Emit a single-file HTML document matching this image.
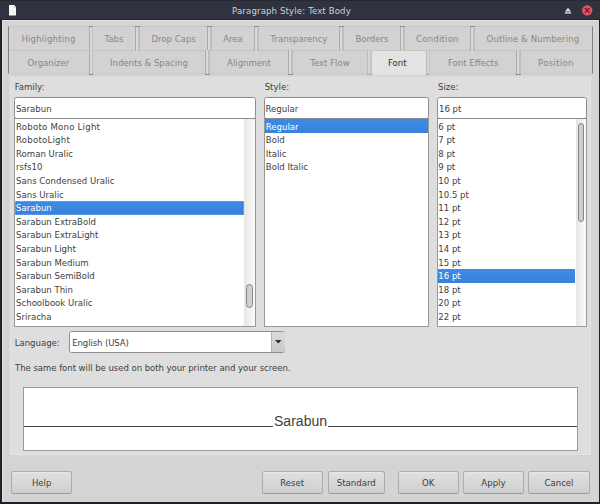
<!DOCTYPE html>
<html>
<head>
<meta charset="utf-8">
<title>Paragraph Style: Text Body</title>
<style>
html,body{margin:0;padding:0;}
body{width:600px;height:504px;overflow:hidden;background:#d4d4d4;font-family:"DejaVu Sans Condensed","Liberation Sans","DejaVu Sans",sans-serif;font-size:9.5px;color:#3e3e3e;position:relative;}
.abs{position:absolute;}
#win{position:absolute;left:0;top:0;width:600px;height:504px;background:#d4d4d4;overflow:hidden;}
#title{position:absolute;left:0;top:0;width:600px;height:20px;background:#2f3340;border-top:1px solid #262932;border-bottom:1.4px solid #23262e;box-sizing:border-box;}
#hl{position:absolute;left:2.3px;top:20px;width:596px;height:482px;box-sizing:border-box;border-top:1px solid #e6e6e6;border-left:1px solid #e0e0e0;}
#title .t{position:absolute;left:0;width:583px;top:3.2px;text-align:center;color:#cdd0d7;font-size:9.5px;letter-spacing:0.15px;line-height:14px;white-space:nowrap;}
#bl{position:absolute;left:0;top:20px;width:2.2px;height:484px;background:#1f2127;}
#br{position:absolute;left:598.6px;top:20px;width:1.7px;height:484px;background:#1f2127;}
#bb{position:absolute;left:0;top:502px;width:600px;height:2px;background:#1f2127;}
#tabbg{position:absolute;left:7.6px;top:26px;width:585px;height:48.4px;background:#d2d2d2;border:1px solid #c4c4c4;border-bottom-color:#c8c8c8;border-left-color:#808080;border-right-color:#808080;box-sizing:border-box;}
#tabmid{position:absolute;left:8.6px;top:50px;width:583px;height:1px;background:#c4c4c4;}
.tab{position:absolute;height:24px;color:#878787;text-align:center;line-height:23.5px;font-size:9.5px;white-space:nowrap;}
.tab.on{background:#e3e3e3;color:#2f2f2f;height:24.5px;border-radius:2px 2px 0 0;box-sizing:border-box;padding-right:3px;}
.sep.lt{opacity:0.55;}
.sep.r2{background-position:0 100%,0 0;}
.sep{position:absolute;width:4.4px;background:linear-gradient(#8e8e8e,#8e8e8e) 0 0/100% 1px no-repeat,linear-gradient(90deg,#acacac 0,#acacac 1px,#d9d9d9 1px,#d9d9d9 3.4px,#bebebe 3.4px,#bebebe 4.4px);}
#panel{position:absolute;left:10.2px;top:75.6px;width:580.8px;height:379.9px;background:#dedede;border:1px solid #e4e4e4;border-top-color:#dadada;box-sizing:border-box;}
.lbl{position:absolute;font-size:9.5px;line-height:12px;white-space:nowrap;}
.entry{position:absolute;box-sizing:border-box;background:#fff;border:1px solid #8e8e8e;border-radius:2.5px;font-size:9.5px;line-height:12px;white-space:nowrap;}
.entry span{position:absolute;left:0.6px;top:4.6px;}
.list{position:absolute;box-sizing:border-box;background:#fff;border:1px solid #999;border-top-color:#8a8a8a;}
.it{padding-left:0.8px;position:absolute;height:13.6px;line-height:13.6px;font-size:9.5px;white-space:nowrap;box-sizing:border-box;}
.it b{font-weight:normal;position:relative;top:0.3px;}
.it b.n{left:-0.9px;}
.it.foc{outline:1px dotted #e8963c;outline-offset:-1px;}
.it.sel{background:linear-gradient(#3b8ce6,#3a80d9);color:#fff;height:14.1px;}
.sb{position:absolute;background:linear-gradient(90deg,#e6e6e6,#fafafa);}
.th{position:absolute;background:#cfcfcf;border:1px solid #858585;border-radius:3.6px;box-sizing:border-box;}
.btn{position:absolute;box-sizing:border-box;height:23.2px;top:470.8px;border:1px solid #adadad;border-bottom-color:#9c9c9c;border-radius:2.5px;background:linear-gradient(#e0e0e0,#cfcfcf);box-shadow:inset 0 1px 0 #e8e8e8;text-align:center;line-height:21px;font-size:9.5px;white-space:nowrap;}
</style>
</head>
<body>
<div id="win">
<div id="title"><div class="t">Paragraph Style: Text Body</div>
<svg class="abs" style="left:8.8px;top:4px" width="7.5" height="10.5" viewBox="0 0 7.5 10.5"><path d="M0 0 H5 L7.5 2.5 V10.5 H0 Z" fill="#f6f6f4"/><path d="M5 0 V2.5 H7.5 Z" fill="#bdbdb8"/></svg>
<svg class="abs" style="left:564px;top:6px" width="9" height="8" viewBox="0 0 9 8"><path d="M4 0.8 L7.1 4.4 H0.9 Z" fill="#d8dbe0"/><rect x="0.9" y="5.2" width="6.2" height="1.4" fill="#d8dbe0"/></svg>
<svg class="abs" style="left:581px;top:3px" width="13" height="13" viewBox="0 0 13 13"><circle cx="6.2" cy="6.4" r="5.2" fill="#e5525c"/><path d="M4.4 4.5 L8 8.1 M8 4.5 L4.4 8.1" stroke="#3a2f3a" stroke-width="1.4" stroke-linecap="round"/></svg>
</div>
<div id="hl"></div><div id="bl"></div><div id="br"></div><div id="bb"></div>

<div id="tabbg"></div>
<div id="tabmid"></div>
<div class="tab" style="left:8px;top:26.5px;width:81.0px;letter-spacing:0.2px">Highlighting</div>
<div class="tab" style="left:92.4px;top:26.5px;width:43.2px;letter-spacing:0px">Tabs</div>
<div class="tab" style="left:139.6px;top:26.5px;width:68.0px;letter-spacing:0px">Drop Caps</div>
<div class="tab" style="left:211.6px;top:26.5px;width:42.8px;letter-spacing:0px">Area</div>
<div class="tab" style="left:258.4px;top:26.5px;width:81.2px;letter-spacing:0px">Transparency</div>
<div class="tab" style="left:343.6px;top:26.5px;width:56.8px;letter-spacing:0px">Borders</div>
<div class="tab" style="left:404.4px;top:26.5px;width:66.0px;letter-spacing:0.2px">Condition</div>
<div class="tab" style="left:474.4px;top:26.5px;width:117.1px;letter-spacing:0.11px">Outline &amp; Numbering</div>
<div class="tab" style="left:8px;top:50.5px;width:81.0px;letter-spacing:0px">Organizer</div>
<div class="tab" style="left:92.4px;top:50.5px;width:113.2px;letter-spacing:0px">Indents &amp; Spacing</div>
<div class="tab" style="left:209.6px;top:50.5px;width:78.8px;letter-spacing:0px">Alignment</div>
<div class="tab" style="left:292.4px;top:50.5px;width:75.2px;letter-spacing:0px">Text Flow</div>
<div class="tab on" style="left:371.6px;top:50.5px;width:54.4px;letter-spacing:0px">Font</div>
<div class="tab" style="left:430px;top:50.5px;width:86.4px;letter-spacing:0px">Font Effects</div>
<div class="tab" style="left:520.4px;top:50.5px;width:71.1px;letter-spacing:0.3px">Position</div>
<div class="sep" style="left:88.8px;top:26px;height:24.5px"></div>
<div class="sep" style="left:135.4px;top:26px;height:24.5px"></div>
<div class="sep" style="left:207.4px;top:26px;height:24.5px"></div>
<div class="sep" style="left:254.2px;top:26px;height:24.5px"></div>
<div class="sep" style="left:339.4px;top:26px;height:24.5px"></div>
<div class="sep" style="left:400.2px;top:26px;height:24.5px"></div>
<div class="sep" style="left:470.2px;top:26px;height:24.5px"></div>
<div class="sep r2" style="left:88.8px;top:50.4px;height:24.2px"></div>
<div class="sep r2" style="left:205.4px;top:50.4px;height:24.2px"></div>
<div class="sep r2" style="left:288.2px;top:50.4px;height:24.2px"></div>
<div class="sep r2 lt" style="left:367.4px;top:50.4px;height:24.2px"></div>
<div class="sep r2 lt" style="left:425.8px;top:50.4px;height:24.2px"></div>
<div class="sep r2" style="left:516.2px;top:50.4px;height:24.2px"></div>

<div id="panel"></div>

<div class="lbl" style="left:14.7px;top:81.1px">Family:</div>
<div class="lbl" style="left:264.7px;top:81.1px">Style:</div>
<div class="lbl" style="left:438px;top:81.1px">Size:</div>

<div class="entry" style="left:14.3px;top:97px;width:241.8px;height:22px"><span>Sarabun</span></div>
<div class="entry" style="left:264px;top:97px;width:164.5px;height:22px"><span>Regular</span></div>
<div class="entry" style="left:437.4px;top:97px;width:149.7px;height:22px"><span>16 pt</span></div>

<div class="list" style="left:14.3px;top:118px;width:241.8px;height:208.5px"></div>
<div class="list" style="left:264px;top:118px;width:164.5px;height:208.5px"></div>
<div class="list" style="left:437.4px;top:118px;width:149.7px;height:208.5px"></div>

<div class="sb" style="left:244.3px;top:119px;width:10.8px;height:206.5px"></div>
<div class="th" style="left:245.8px;top:284.2px;width:7.2px;height:24px"></div>
<div class="sb" style="left:575.5px;top:119px;width:10.6px;height:206.5px"></div>
<div class="th" style="left:577.5px;top:123px;width:6.5px;height:98.5px"></div>

<div class="it" style="left:15.3px;top:119.30px;letter-spacing:0.24px;"><b>Roboto Mono Light</b></div>
<div class="it" style="left:15.3px;top:132.90px;letter-spacing:0.24px;"><b>RobotoLight</b></div>
<div class="it" style="left:15.3px;top:146.50px;"><b>Roman Uralic</b></div>
<div class="it" style="left:15.3px;top:160.10px;"><b>rsfs10</b></div>
<div class="it" style="left:15.3px;top:173.70px;"><b>Sans Condensed Uralic</b></div>
<div class="it" style="left:15.3px;top:187.30px;"><b>Sans Uralic</b></div>
<div class="it sel foc" style="left:15.3px;top:200.90px;width:228.9px;"><b>Sarabun</b></div>
<div class="it" style="left:15.3px;top:214.50px;"><b>Sarabun ExtraBold</b></div>
<div class="it" style="left:15.3px;top:228.10px;"><b>Sarabun ExtraLight</b></div>
<div class="it" style="left:15.3px;top:241.70px;"><b>Sarabun Light</b></div>
<div class="it" style="left:15.3px;top:255.30px;"><b>Sarabun Medium</b></div>
<div class="it" style="left:15.3px;top:268.90px;"><b>Sarabun SemiBold</b></div>
<div class="it" style="left:15.3px;top:282.50px;"><b>Sarabun Thin</b></div>
<div class="it" style="left:15.3px;top:296.10px;"><b>Schoolbook Uralic</b></div>
<div class="it" style="left:15.3px;top:309.70px;"><b>Sriracha</b></div>
<div class="it sel" style="left:265px;top:119.30px;width:162.5px;"><b>Regular</b></div>
<div class="it" style="left:265px;top:132.90px;"><b>Bold</b></div>
<div class="it" style="left:265px;top:146.50px;"><b>Italic</b></div>
<div class="it" style="left:265px;top:160.10px;"><b>Bold Italic</b></div>
<div class="it" style="left:438.4px;top:119.30px;"><b class="n">6 pt</b></div>
<div class="it" style="left:438.4px;top:132.90px;"><b class="n">7 pt</b></div>
<div class="it" style="left:438.4px;top:146.50px;"><b class="n">8 pt</b></div>
<div class="it" style="left:438.4px;top:160.10px;"><b class="n">9 pt</b></div>
<div class="it" style="left:438.4px;top:173.70px;"><b class="n">10 pt</b></div>
<div class="it" style="left:438.4px;top:187.30px;"><b class="n">10.5 pt</b></div>
<div class="it" style="left:438.4px;top:200.90px;"><b class="n">11 pt</b></div>
<div class="it" style="left:438.4px;top:214.50px;"><b class="n">12 pt</b></div>
<div class="it" style="left:438.4px;top:228.10px;"><b class="n">13 pt</b></div>
<div class="it" style="left:438.4px;top:241.70px;"><b class="n">14 pt</b></div>
<div class="it" style="left:438.4px;top:255.30px;"><b class="n">15 pt</b></div>
<div class="it sel" style="left:438.4px;top:268.90px;width:136.9px;"><b class="n">16 pt</b></div>
<div class="it" style="left:438.4px;top:282.50px;"><b class="n">18 pt</b></div>
<div class="it" style="left:438.4px;top:296.10px;"><b class="n">20 pt</b></div>
<div class="it" style="left:438.4px;top:309.70px;"><b class="n">22 pt</b></div>

<div class="lbl" style="left:14.7px;top:336.5px">Language:</div>
<div class="entry" style="left:68.5px;top:331px;width:216.5px;height:21.5px"><span style="left:2.7px;letter-spacing:-0.1px">English (USA)</span></div>
<div class="abs" style="left:270.8px;top:332px;width:13.2px;height:19.5px;background:linear-gradient(#dcdcdc,#c9c9c9);border-left:1px solid #b5b5b5;border-radius:0 2px 2px 0"></div>
<svg class="abs" style="left:274.5px;top:340px" width="7" height="4" viewBox="0 0 7 4"><path d="M0 0 H6.6 L3.3 3.6 Z" fill="#2e2e2e"/></svg>

<div class="lbl" style="left:15px;top:361.8px;letter-spacing:-0.05px">The same font will be used on both your printer and your screen.</div>

<div class="abs" style="left:22.5px;top:386.8px;width:555.7px;height:64.7px;box-sizing:border-box;background:#fff;border:1px solid #9a9a9a;"></div>
<div class="abs" style="left:23.5px;top:426px;width:249.8px;height:1px;background:#4a4a4a"></div>
<div class="abs" style="left:327.5px;top:426px;width:249.7px;height:1px;background:#4a4a4a"></div>
<div class="abs" id="pv" style="left:273.6px;top:410.8px;font-family:'Liberation Sans','DejaVu Sans',sans-serif;font-size:14.7px;line-height:20px;color:#3d3d3d;white-space:nowrap;transform-origin:0 0;transform:scaleX(0.955)">Sarabun</div>

<div class="btn" style="left:11.3px;width:60.7px">Help</div>
<div class="btn" style="left:262px;width:60.5px">Reset</div>
<div class="btn" style="left:327.5px;width:57.5px">Standard</div>
<div class="btn" style="left:397.5px;width:61.2px">OK</div>
<div class="btn" style="left:463.2px;width:60.5px">Apply</div>
<div class="btn" style="left:528.3px;width:61.4px">Cancel</div>
</div>
</body>
</html>
